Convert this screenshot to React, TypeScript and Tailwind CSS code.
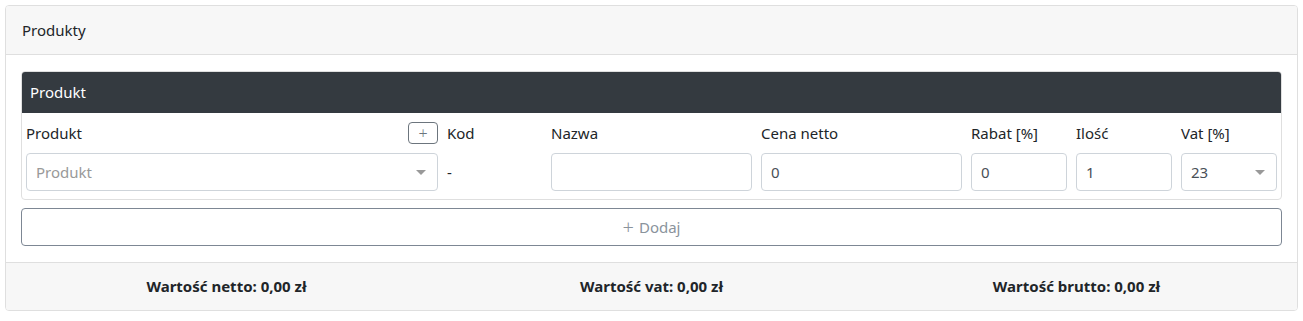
const font = { fontFamily: '"Noto Sans", "Open Sans", sans-serif' };

function Caret() {
  return (
    <svg width="10" height="5" viewBox="0 0 10 5" className="shrink-0">
      <path d="M0 0 L10 0 L5 5 Z" fill="#999" />
    </svg>
  );
}

const box =
  'h-[38px] w-full rounded-[4px] border border-[#ced4da] bg-white pl-[9px] pr-[11px] flex items-center text-[15px]';

function Field({ label, width, children }: { label: string; width: string; children?: React.ReactNode }) {
  return (
    <div className={width + ' shrink-0'}>
      <div className="h-[22px] mb-[9px] flex items-center">{label}</div>
      {children}
    </div>
  );
}

export default function App() {
  return (
    <div className="bg-white p-[5px] text-[15px] text-[#212529]" style={font}>
      <div className="rounded-[4px] border border-[#dfdfdf] overflow-hidden">
        <div className="h-[49px] bg-[#f7f7f7] border-b border-[#dfdfdf] px-4 flex items-center">
          Produkty
        </div>

        <div className="px-[15px] pt-4 pb-4">
          <div className="rounded-[4px] border border-[#dfdfdf] overflow-hidden">
            <div className="h-[41px] bg-[#343a40] text-white flex items-center px-2">
              Produkt
            </div>
            <div className="flex gap-[9px] px-1 pt-[9px] pb-[8px]">
              <div className="w-[412px] shrink-0">
                <div className="h-[22px] mb-[9px] flex items-center justify-between">
                  <span>Produkt</span>
                  <span className="w-[30px] h-[22px] rounded-[4px] border border-[#6c757d] text-[#6c757d] flex items-center justify-center text-[16px] leading-none font-light">
                    +
                  </span>
                </div>
                <div className={box + ' justify-between text-[#999999]'}>
                  <span>Produkt</span>
                  <Caret />
                </div>
              </div>
              <Field label="Kod" width="w-[95px]">
                <div className="h-[38px] flex items-center">-</div>
              </Field>
              <Field label="Nazwa" width="w-[201px]">
                <div className={box + ' text-[#495057]'}></div>
              </Field>
              <Field label="Cena netto" width="w-[201px]">
                <div className={box + ' text-[#495057]'}>0</div>
              </Field>
              <Field label="Rabat [%]" width="w-[96px]">
                <div className={box + ' text-[#495057]'}>0</div>
              </Field>
              <Field label="Ilość" width="w-[96px]">
                <div className={box + ' text-[#495057]'}>1</div>
              </Field>
              <Field label="Vat [%]" width="w-[96px]">
                <div className={box + ' justify-between text-[#495057]'}>
                  <span>23</span>
                  <Caret />
                </div>
              </Field>
            </div>
          </div>

          <button className="mt-[8px] w-full h-[38px] rounded-[4px] border border-[#7d8794] bg-white text-[#8a939c] text-[15px] flex items-center justify-center gap-[5px]">
            <span className="text-[20px] leading-none font-light">+</span>
            <span>Dodaj</span>
          </button>
        </div>

        <div className="h-[48px] bg-[#f7f7f7] border-t border-[#dfdfdf] px-2 grid grid-cols-3 items-center font-bold">
          <div className="text-center">Wartość netto: 0,00 zł</div>
          <div className="text-center">Wartość vat: 0,00 zł</div>
          <div className="text-center">Wartość brutto: 0,00 zł</div>
        </div>
      </div>
    </div>
  );
}
